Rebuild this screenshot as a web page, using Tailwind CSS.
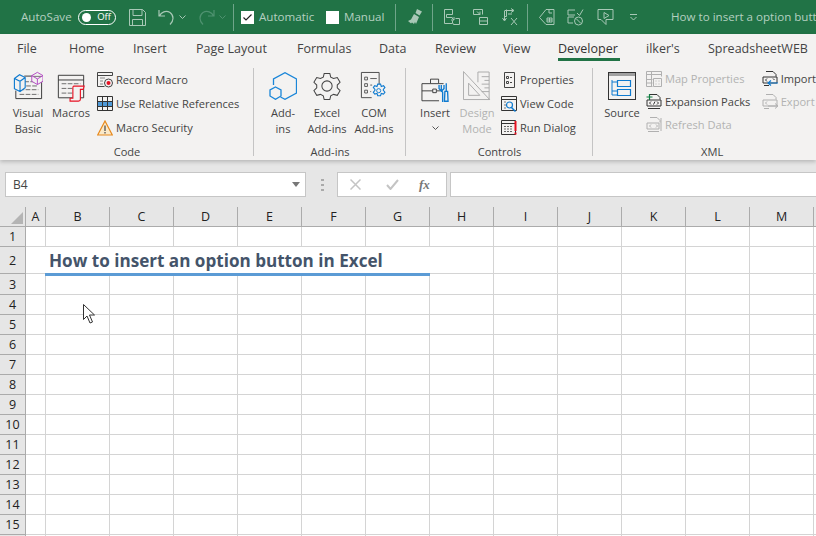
<!doctype html>
<html><head><meta charset="utf-8"><script src="https://cdn.jsdelivr.net/npm/@tailwindcss/browser@4"></script></head>
<body class="m-0">
<div class="relative w-[816px] h-[536px] overflow-hidden bg-white font-['Open_Sans',sans-serif] text-[11.1px] text-[#444]">

<!-- title bar -->
<header class="h-[34px] bg-[#217346] flex items-center text-[#b4d0c0] text-[11.6px] whitespace-nowrap overflow-hidden [&>*]:shrink-0">
  <span class="ml-[21px] w-[57px]">AutoSave</span>
  <span class="w-[38px] h-[15px] rounded-full border border-white flex items-center justify-between pl-[3px] pr-[4px] text-white text-[9.5px]"><span class="w-[9px] h-[9px] rounded-full bg-white"></span>Off</span>
  <svg class="ml-[13px]" width="17" height="17" viewBox="0 0 17 17" fill="none" stroke="#a8c8b6"><path d="M.5.500h13l3 3v13H.5zM4 .5v6h9v-6M3.500 16.500v-6h10v6"/></svg>
  <svg class="ml-[12px]" width="17" height="17" viewBox="0 0 17 17" fill="none" stroke="#a8c8b6" stroke-width="1.200"><path d="M1 1v6h6M1.500 7C3 3 8 1 12 3.500c4 3 4 8 0 12"/></svg>
  <svg class="ml-[4px]" width="7" height="4" viewBox="0 0 7 4" fill="none" stroke="#a8c8b6"><path d="M.5.500l3 3 3-3"/></svg>
  <svg class="ml-[12px]" width="17" height="17" viewBox="0 0 17 17" fill="none" stroke="#4f9270" stroke-width="1.200"><path d="M16 1v6h-6M15.500 7C14 3 9 1 5 3.500c-4 3-4 8 0 12"/></svg>
  <svg class="ml-[4px]" width="7" height="4" viewBox="0 0 7 4" fill="none" stroke="#4f9270"><path d="M.5.500l3 3 3-3"/></svg>
  <span class="ml-[7px] w-px h-[27px] bg-[#6fa58a]"></span>
  <span class="ml-[7px] w-[13px] h-[13px] bg-white flex items-center justify-center"><svg width="9" height="7" viewBox="0 0 9 7" fill="none" stroke="#222" stroke-width="1.200"><path d="M.5 3.500l2.500 2.500 5.500-5.500"/></svg></span>
  <span class="ml-[5px] w-[67px]">Automatic</span>
  <span class="w-[13px] h-[13px] bg-white"></span>
  <span class="ml-[5px] w-[51px]">Manual</span>
  <span class="w-px h-[27px] bg-[#6fa58a]"></span>
  <svg class="ml-[10px]" width="18" height="18" viewBox="0 0 18 18" fill="#a8c8b6"><path d="M11 1l5 2.500-2.500 4-4-2.500zM8 6l5 3-3 7-1-2-1 2-2-1.500-1 1-3-2.500 3-1.500z"/></svg>
  <span class="ml-[8px] w-px h-[27px] bg-[#6fa58a]"></span>
  <svg class="ml-[10px]" width="18" height="18" viewBox="0 0 18 18" fill="none" stroke="#a8c8b6"><path d="M1.500 1.500h8v5h-6v3h6M1.500 1.500v14h8v-3M8 9l3 3m0-3v3H8M12.500 10.500h4v6h-6v-1"/></svg>
  <svg class="ml-[11px]" width="17" height="18" viewBox="0 0 17 18" fill="none" stroke="#a8c8b6"><path d="M1.500 1.500h9v5M1.500 1.500v5h4M5 3.500l3 3m0-3v3H5M7.500 9.500h8v7h-8zM7.500 13h8"/></svg>
  <svg class="ml-[12px]" width="17" height="18" viewBox="0 0 17 18" fill="none" stroke="#a8c8b6"><path d="M3.500 2.500h9M10 .5l3 2-3 2M5.500 1.500v7h-2M3.500 3v9M1.500 10l2 3 2-3M10 10l6 7m0-7l-6 7M7 6h4"/></svg>
  <span class="ml-[9px] w-px h-[27px] bg-[#6fa58a]"></span>
  <svg class="ml-[10px]" width="17" height="18" viewBox="0 0 17 18" fill="none" stroke="#a8c8b6"><path d="M8 1.500h8v15H8L1.500 9.500zM9 10h5v4H9zM11.500 10v4M9 12h5M11 2v3h3"/></svg>
  <svg class="ml-[12px]" width="17" height="18" viewBox="0 0 17 18" fill="none" stroke="#a8c8b6"><path d="M1 2h7M1 2v5h7M1 9h6M1 9v6h5M10 5l2.500 2.500L16 1.500"/><circle cx="11.500" cy="13" r="4"/><path d="M9 10.500l5 5"/></svg>
  <svg class="ml-[13px]" width="17" height="18" viewBox="0 0 17 18" fill="none" stroke="#a8c8b6"><path d="M1 1.500h15v10H9v5l-5-5H1zM7 4.500v6l5-3z"/></svg>
  <svg class="ml-[15px]" width="9" height="7" viewBox="0 0 9 7" fill="none" stroke="#a8c8b6"><path d="M1 .5h7M1.500 3l3 3 3-3"/></svg>
  <span class="ml-[33px]">How to insert a option button in Excel</span>
</header>

<!-- ribbon -->
<div class="relative z-10 bg-[#f3f2f1] h-[126px] shadow-[0_2px_4px_rgba(0,0,0,0.2)]">
  <nav class="h-[30px] flex items-center text-[12.5px] text-[#444] whitespace-nowrap">
    <span class="ml-[17px] w-[52px]">File</span>
    <span class="w-[64px]">Home</span>
    <span class="w-[63px]">Insert</span>
    <span class="w-[101px]">Page Layout</span>
    <span class="w-[82px]">Formulas</span>
    <span class="w-[56px]">Data</span>
    <span class="w-[68px]">Review</span>
    <span class="w-[55px]">View</span>
    <span class="relative w-[88px] text-[#333]">Developer<span class="absolute left-0 top-[18px] w-[62px] h-[3px] bg-[#217346]"></span></span>
    <span class="w-[62px]">ilker's</span>
    <span>SpreadsheetWEB</span>
  </nav>

  <div class="h-[96px] flex whitespace-nowrap leading-[16px]">
    <!-- Code -->
    <section class="w-[254px] flex flex-col shrink-0">
      <div class="flex-1 flex">
        <div class="ml-[8px] w-[40px] flex flex-col items-center pt-[6px]">
          <svg width="30" height="30" viewBox="0 0 32 32" fill="none"><path d="M12 6.500h18.500v24H3V22" stroke="#333"/><path d="M12 12.500h15M14 17h13M7 21h20M7 26h20" stroke="#666" stroke-dasharray="5 1.500"/><path d="M20 6l6-3.500 6 3.500v6l-6 3.500-6-3.500zM20 6l6 3.500 6-3.500M26 9.500v6" stroke="#b146c2" fill="#f3f2f1"/><path d="M1.500 9l5.500-4 6 3v11l-5.500 4-6-3zM1.500 9l6 3 5.500-4M7.500 12v11" stroke="#0f7bd0" fill="#f3f2f1" stroke-width="1.200"/></svg>
          <span class="mt-[5px] text-center">Visual<br>Basic</span>
        </div>
        <div class="ml-[3px] w-[40px] flex flex-col items-center pt-[8px]">
          <svg width="30" height="30" viewBox="0 0 32 32" fill="none"><path d="M2.500 3.500h27v24h-27zM2.500 8.500h27" stroke="#333"/><path d="M6 12.500h20M6 17.500h16M6 22.500h12" stroke="#666" stroke-dasharray="5 1.500"/><path d="M19 15h11l-1 3.500h-3v10.500a2 2 0 0 1-2 2h-9v-3h3V17a2 2 0 0 1 1-2z" fill="#f3f2f1" stroke="#e81123" stroke-width="1.200"/></svg>
          <span class="mt-[3px] text-center">Macros</span>
        </div>
        <div class="ml-[6px] flex flex-col pt-[8px] gap-[8px]">
          <div class="flex items-center h-[16px] gap-[3px]"><svg width="16" height="16" viewBox="0 0 16 16" fill="none"><path d="M.5.500h15v3M.5.500v14h7M.5 3.500h15" stroke="#444"/><path d="M3 6h5M3 9h3M3 12h3" stroke="#888"/><circle cx="11.500" cy="11" r="4" fill="#f3f2f1" stroke="#444"/><circle cx="11.500" cy="11" r="2" fill="#e81123"/></svg><span>Record Macro</span></div>
          <div class="flex items-center h-[16px] gap-[3px]"><svg width="16" height="16" viewBox="0 0 16 16" fill="none"><rect x="0" y="5" width="16" height="6" fill="#4f9ad8"/><path d="M.5.500h15v14H.5zM5.500.500v14M10.500.500v14M.5 5.500h15M.5 10.500h15" stroke="#333"/></svg><span>Use Relative References</span></div>
          <div class="flex items-center h-[16px] gap-[3px]"><svg width="16" height="16" viewBox="0 0 16 16" fill="none"><path d="M8 1l7.300 14H.7z" fill="#fbe9c8" stroke="#e8891c" stroke-width="1.200"/><path d="M8 5.500v5.500M8 12v1.500" stroke="#444" stroke-width="1.200"/></svg><span>Macro Security</span></div>
        </div>
      </div>
      <div class="h-[20px] text-center pt-[4px]">Code</div>
    </section>
    <span class="w-px h-[88px] mt-[4px] bg-[#c4c4c4] -ml-[1px] shrink-0"></span>

    <!-- Add-ins -->
    <section class="w-[152px] flex flex-col shrink-0">
      <div class="flex-1 flex">
        <div class="ml-[9px] w-[40px] flex flex-col items-center pt-[8px]">
          <svg width="28" height="28" viewBox="0 0 28 28" fill="none" stroke="#1a86d8" stroke-width="1.300"><path d="M4.500 13V7L16 .7l11.500 6.300v14L16 27.300 11.500 25"/><path d="M6.500 15l5.500 3v6l-5.500 3.300L1 24v-6z"/></svg>
          <span class="mt-[5px] text-center">Add-<br>ins</span>
        </div>
        <div class="ml-[1px] w-[46px] flex flex-col items-center pt-[7px]">
          <svg width="28" height="30" viewBox="0 0 30 32" fill="none" stroke="#444" stroke-width="1.100"><path d="M12 2.500h6l1 4 3 1.500 4-1 3 5-3 3v3l3 3-3 5-4-1-3 1.500-1 4h-6l-1-4-3-1.500-4 1-3-5 3-3v-3l-3-3 3-5 4 1 3-1.500z"/><circle cx="15" cy="16" r="5.500"/></svg>
          <span class="mt-[4px] text-center">Excel<br>Add-ins</span>
        </div>
        <div class="w-[48px] flex flex-col items-center pt-[7px]">
          <svg width="28" height="30" viewBox="0 0 30 32" fill="none"><path d="M1.500 1.500h19v16M1.500 1.500v27h11" stroke="#444"/><path d="M5 6.500h3v3H5zM5 13.500h3v3H5zM5 20.500h3v3H5zM11 8h7M11 15h2M11 22h1" stroke="#555"/><path d="M20 14l2 0 .8 2.500 2.400-.8 1.500 2-1.700 2v1l1.700 2-1.500 2-2.400-.8-.8 2.500h-3l-.8-2.500-2.400.8-1.500-2 1.700-2v-1l-1.700-2 1.500-2 2.400.8.800-2.500z" fill="#f3f2f1" stroke="#0f7bd0" stroke-width="1.200"/><circle cx="20" cy="21" r="2.200" stroke="#0f7bd0"/></svg>
          <span class="mt-[4px] text-center">COM<br>Add-ins</span>
        </div>
      </div>
      <div class="h-[20px] text-center pt-[4px]">Add-ins</div>
    </section>
    <span class="w-px h-[88px] mt-[4px] bg-[#c4c4c4] -ml-[1px] shrink-0"></span>

    <!-- Controls -->
    <section class="w-[187px] flex flex-col shrink-0">
      <div class="flex-1 flex">
        <div class="ml-[9px] w-[40px] flex flex-col items-center pt-[12px]">
          <svg width="30" height="27" viewBox="0 0 32 30" fill="none"><path d="M1.500 8.500h24M1.500 8.500v19h19M11 8V3.500h9V8M1.500 16.500h12M18 16.500h4" stroke="#333"/><path d="M13.500 14.500h4v4h-4z" stroke="#333"/><path d="M23 10v6l1.500 2v11M20.500 10v4l2.500 3 3-3v-4" stroke="#0f7bd0" stroke-width="1.500"/><path d="M28.500 8v9M27 17h3l.5 11h-4z" stroke="#0f7bd0" stroke-width="1.500"/></svg>
          <span class="mt-[2px] text-center">Insert</span>
          <svg class="mt-[5px]" width="7" height="4" viewBox="0 0 7 4" fill="none" stroke="#555"><path d="M.5.500l3 3 3-3"/></svg>
        </div>
        <div class="ml-[2px] w-[40px] flex flex-col items-center pt-[7px] text-[#b2b2b2]">
          <svg width="28" height="30" viewBox="0 0 30 32" fill="none" stroke="#a8a8a8"><path d="M.5.500l28 30H.5zM6 13l12 13H6z"/><path d="M16 12V1h12v30" /><path d="M20 6h8M23 10h5M20 14h8M23 18h5M20 22h8" /></svg>
          <span class="mt-[4px] text-center">Design<br>Mode</span>
        </div>
        <div class="ml-[4px] flex flex-col pt-[8px] gap-[8px]">
          <div class="flex items-center h-[16px] gap-[3px]"><svg width="16" height="16" viewBox="0 0 16 16" fill="none" stroke="#444"><path d="M3.500.5h10v15h-10zM5.500 4.500h2v2h-2zM5.500 9.500h2v2h-2zM9 5.500h2M9 10.500h2"/></svg><span>Properties</span></div>
          <div class="flex items-center h-[16px] gap-[3px]"><svg width="16" height="16" viewBox="0 0 16 16" fill="none"><path d="M.5.500h15v14H.5zM.5 3.500h15" stroke="#333"/><circle cx="8.500" cy="9" r="3" stroke="#0f7bd0" stroke-width="1.200"/><path d="M10.500 11.500l4 4" stroke="#0f7bd0" stroke-width="1.500"/><path d="M3 6h2M3 9h2M3 12h2" stroke="#777"/></svg><span>View Code</span></div>
          <div class="flex items-center h-[16px] gap-[3px]"><svg width="16" height="16" viewBox="0 0 16 16" fill="none"><path d="M.5.500h14v14H.5zM.5 3.500h14" stroke="#333"/><path d="M3 6.500h9M3 9h9M3 11.500h9" stroke="#666" stroke-dasharray="2 1"/><path d="M14.500 1v10M14.500 12.500v2" stroke="#e81123" stroke-width="2"/></svg><span>Run Dialog</span></div>
        </div>
      </div>
      <div class="h-[20px] text-center pt-[4px]">Controls</div>
    </section>
    <span class="w-px h-[88px] mt-[4px] bg-[#c4c4c4] -ml-[1px] shrink-0"></span>

    <!-- XML -->
    <section class="w-[223px] flex flex-col shrink-0">
      <div class="flex-1 flex">
        <div class="ml-[9px] w-[40px] flex flex-col items-center pt-[8px]">
          <svg width="28" height="28" viewBox="0 0 28 28" fill="none"><rect x=".5" y=".5" width="27" height="27" stroke="#333"/><rect x="1" y="1" width="26" height="3" fill="#a0a0a0"/><path d="M4 8v15h5M4 10h5M4 19h5" stroke="#0f7bd0"/><path d="M9.500 8.500h13v6h-13zM9.500 17.500h13v6h-13z" stroke="#0f7bd0" stroke-width="1.200"/></svg>
          <span class="mt-[5px] text-center">Source</span>
        </div>
        <div class="ml-[4px] w-[106px] flex flex-col pt-[7px] gap-[7px]">
          <div class="flex items-center h-[16px] gap-[3px] text-[#b2b2b2]"><svg width="16" height="16" viewBox="0 0 16 16" fill="none" stroke="#b0b0b0"><path d="M.5.500h15v5M.5.500v15h6M.5 3.500h15M5.500.500v15M.5 8.500h6M.5 12h6M7.500 7.500h8v8h-8zM9.500 10h1M12.500 10h1M9.500 13h1M12.500 13h1"/></svg><span>Map Properties</span></div>
          <div class="flex items-center h-[16px] gap-[3px]"><svg width="16" height="16" viewBox="0 0 16 16" fill="none"><path d="M4 .5h7l3 3v2M1 6h14v6H1zM2 14.500h12" stroke="#333"/><path d="M5 7.500L3.500 9 5 10.500M11 7.500L12.500 9 11 10.500M9 7.500L7.500 10.500" stroke="#333"/><path d="M3.500 0v6M.5 3h6" stroke="#107c41" stroke-width="1.200"/></svg><span>Expansion Packs</span></div>
          <div class="flex items-center h-[16px] gap-[3px] text-[#b2b2b2]"><svg width="16" height="16" viewBox="0 0 16 16" fill="none" stroke="#b0b0b0"><path d="M4 .5h7l3 3v2M1 6h12v6H1zM2 14.500h11M5 7.500L3.500 9 5 10.500M10 7.500L11.500 9 10 10.500M15 1v13"/></svg><span>Refresh Data</span></div>
        </div>
        <div class="ml-[10px] flex flex-col pt-[7px] gap-[7px]">
          <div class="flex items-center h-[16px] gap-[3px]"><svg width="16" height="16" viewBox="0 0 16 16" fill="none"><path d="M4 .5h7l3 3v2M1 6h14v6H1zM2 14.500h5" stroke="#333"/><path d="M5 7.500L3.500 9 5 10.500M11 7.500L12.500 9" stroke="#333"/><path d="M16 12H6M9 9.500L6 12l3 2.500" stroke="#0f7bd0" stroke-width="1.200"/></svg><span>Import</span></div>
          <div class="flex items-center h-[16px] gap-[3px] text-[#b2b2b2]"><svg width="16" height="16" viewBox="0 0 16 16" fill="none" stroke="#b0b0b0"><path d="M4 .5h7l3 3v2M1 6h14v6H1zM2 14.500h5M5 7.500L3.500 9 5 10.500M6 12h9M13 9.500l3 2.500-3 2.500"/></svg><span>Export</span></div>
        </div>
      </div>
      <div class="h-[20px] pt-[4px] pl-[108px]">XML</div>
    </section>
  </div>
</div>

<!-- formula bar -->
<div class="h-[47px] bg-[#e6e6e6] flex items-center pt-[2px] text-[#444]">
  <div class="ml-[5px] w-[301px] h-[25px] bg-white border border-[#c6c6c6] flex items-center justify-between pl-[7px] pr-[5px] text-[12px]">B4<span class="w-0 h-0 border-x-[4px] border-x-transparent border-t-[5px] border-t-[#777]"></span></div>
  <div class="ml-[15px] w-[3px] h-[12px] bg-[repeating-linear-gradient(180deg,#aaa_0,#aaa_2px,transparent_2px,transparent_5px)]"></div>
  <div class="ml-[13px] w-[110px] h-[25px] bg-white border border-[#c6c6c6] flex items-center">
    <svg class="ml-[12px]" width="11" height="11" viewBox="0 0 11 11" stroke="#c4c4c4" stroke-width="1.500"><path d="M.5.500l10 10m0-10l-10 10"/></svg>
    <svg class="ml-[25px]" width="13" height="11" viewBox="0 0 13 11" fill="none" stroke="#c4c4c4" stroke-width="2"><path d="M1 6l3.500 4L12 1"/></svg>
    <span class="ml-[20px] font-['Liberation_Serif',serif] italic font-bold text-[13px] text-[#777]">fx</span>
  </div>
  <div class="ml-[3px] flex-1 h-[25px] bg-white border border-[#c6c6c6] border-r-0"></div>
</div>

<!-- sheet -->
<div class="text-[#222] text-[12.5px] leading-none">
  <div class="flex h-[20px] bg-[#e6e6e6] border-b border-[#ababab] whitespace-nowrap">
    <div class="relative w-[26px] border-r border-[#ababab]"><span class="absolute right-[2px] bottom-[2px] w-0 h-0 border-l-[12px] border-l-transparent border-b-[12px] border-b-[#b4b4b4]"></span></div>
    <div class="w-[20px] border-r border-[#ababab] flex items-center justify-center pt-[1px]">A</div>
    <div class="w-[64px] border-r border-[#ababab] flex items-center justify-center pt-[1px]">B</div>
    <div class="w-[64px] border-r border-[#ababab] flex items-center justify-center pt-[1px]">C</div>
    <div class="w-[64px] border-r border-[#ababab] flex items-center justify-center pt-[1px]">D</div>
    <div class="w-[64px] border-r border-[#ababab] flex items-center justify-center pt-[1px]">E</div>
    <div class="w-[64px] border-r border-[#ababab] flex items-center justify-center pt-[1px]">F</div>
    <div class="w-[64px] border-r border-[#ababab] flex items-center justify-center pt-[1px]">G</div>
    <div class="w-[64px] border-r border-[#ababab] flex items-center justify-center pt-[1px]">H</div>
    <div class="w-[64px] border-r border-[#ababab] flex items-center justify-center pt-[1px]">I</div>
    <div class="w-[64px] border-r border-[#ababab] flex items-center justify-center pt-[1px]">J</div>
    <div class="w-[64px] border-r border-[#ababab] flex items-center justify-center pt-[1px]">K</div>
    <div class="w-[64px] border-r border-[#ababab] flex items-center justify-center pt-[1px]">L</div>
    <div class="w-[64px] border-r border-[#ababab] flex items-center justify-center pt-[1px]">M</div>
  </div>
  <div class="flex h-[20px]"><div class="w-[26px] pt-[2px] bg-[#e6e6e6] border-r border-b border-[#ababab] flex items-center justify-center">1</div><div class="flex-1 border-b border-[#d4d4d4] bg-[linear-gradient(90deg,#d4d4d4_1px,transparent_1px)] bg-[length:64px_100%] bg-[position:19px_0]"></div></div>
  <div class="flex h-[27px]"><div class="w-[26px] pt-[2px] bg-[#e6e6e6] border-r border-b border-[#ababab] flex items-center justify-center">2</div><div class="relative flex-1 border-b border-[#d4d4d4] bg-[linear-gradient(90deg,#d4d4d4_1px,transparent_1px)] bg-[length:64px_100%] bg-[position:19px_0]"><span class="absolute left-[19px] top-0 w-[385px] h-[29px] bg-white border-b-[3px] border-[#5b9bd5] pl-[4px] pt-[5px] text-[17.1px] font-bold text-[#44546a] whitespace-nowrap">How to insert an option button in Excel</span></div></div>
  <div class="flex h-[21px]"><div class="w-[26px] pt-[2px] bg-[#e6e6e6] border-r border-b border-[#ababab] flex items-center justify-center">3</div><div class="flex-1 border-b border-[#d4d4d4] bg-[linear-gradient(90deg,#d4d4d4_1px,transparent_1px)] bg-[length:64px_100%] bg-[position:19px_0]"></div></div>
  <div class="flex h-[20px]"><div class="w-[26px] pt-[2px] bg-[#e6e6e6] border-r border-b border-[#ababab] flex items-center justify-center">4</div><div class="flex-1 border-b border-[#d4d4d4] bg-[linear-gradient(90deg,#d4d4d4_1px,transparent_1px)] bg-[length:64px_100%] bg-[position:19px_0]"></div></div>
  <div class="flex h-[20px]"><div class="w-[26px] pt-[2px] bg-[#e6e6e6] border-r border-b border-[#ababab] flex items-center justify-center">5</div><div class="flex-1 border-b border-[#d4d4d4] bg-[linear-gradient(90deg,#d4d4d4_1px,transparent_1px)] bg-[length:64px_100%] bg-[position:19px_0]"></div></div>
  <div class="flex h-[20px]"><div class="w-[26px] pt-[2px] bg-[#e6e6e6] border-r border-b border-[#ababab] flex items-center justify-center">6</div><div class="flex-1 border-b border-[#d4d4d4] bg-[linear-gradient(90deg,#d4d4d4_1px,transparent_1px)] bg-[length:64px_100%] bg-[position:19px_0]"></div></div>
  <div class="flex h-[20px]"><div class="w-[26px] pt-[2px] bg-[#e6e6e6] border-r border-b border-[#ababab] flex items-center justify-center">7</div><div class="flex-1 border-b border-[#d4d4d4] bg-[linear-gradient(90deg,#d4d4d4_1px,transparent_1px)] bg-[length:64px_100%] bg-[position:19px_0]"></div></div>
  <div class="flex h-[20px]"><div class="w-[26px] pt-[2px] bg-[#e6e6e6] border-r border-b border-[#ababab] flex items-center justify-center">8</div><div class="flex-1 border-b border-[#d4d4d4] bg-[linear-gradient(90deg,#d4d4d4_1px,transparent_1px)] bg-[length:64px_100%] bg-[position:19px_0]"></div></div>
  <div class="flex h-[20px]"><div class="w-[26px] pt-[2px] bg-[#e6e6e6] border-r border-b border-[#ababab] flex items-center justify-center">9</div><div class="flex-1 border-b border-[#d4d4d4] bg-[linear-gradient(90deg,#d4d4d4_1px,transparent_1px)] bg-[length:64px_100%] bg-[position:19px_0]"></div></div>
  <div class="flex h-[20px]"><div class="w-[26px] pt-[2px] bg-[#e6e6e6] border-r border-b border-[#ababab] flex items-center justify-center">10</div><div class="flex-1 border-b border-[#d4d4d4] bg-[linear-gradient(90deg,#d4d4d4_1px,transparent_1px)] bg-[length:64px_100%] bg-[position:19px_0]"></div></div>
  <div class="flex h-[20px]"><div class="w-[26px] pt-[2px] bg-[#e6e6e6] border-r border-b border-[#ababab] flex items-center justify-center">11</div><div class="flex-1 border-b border-[#d4d4d4] bg-[linear-gradient(90deg,#d4d4d4_1px,transparent_1px)] bg-[length:64px_100%] bg-[position:19px_0]"></div></div>
  <div class="flex h-[20px]"><div class="w-[26px] pt-[2px] bg-[#e6e6e6] border-r border-b border-[#ababab] flex items-center justify-center">12</div><div class="flex-1 border-b border-[#d4d4d4] bg-[linear-gradient(90deg,#d4d4d4_1px,transparent_1px)] bg-[length:64px_100%] bg-[position:19px_0]"></div></div>
  <div class="flex h-[20px]"><div class="w-[26px] pt-[2px] bg-[#e6e6e6] border-r border-b border-[#ababab] flex items-center justify-center">13</div><div class="flex-1 border-b border-[#d4d4d4] bg-[linear-gradient(90deg,#d4d4d4_1px,transparent_1px)] bg-[length:64px_100%] bg-[position:19px_0]"></div></div>
  <div class="flex h-[20px]"><div class="w-[26px] pt-[2px] bg-[#e6e6e6] border-r border-b border-[#ababab] flex items-center justify-center">14</div><div class="flex-1 border-b border-[#d4d4d4] bg-[linear-gradient(90deg,#d4d4d4_1px,transparent_1px)] bg-[length:64px_100%] bg-[position:19px_0]"></div></div>
  <div class="flex h-[20px]"><div class="w-[26px] pt-[2px] bg-[#e6e6e6] border-r border-b border-[#ababab] flex items-center justify-center">15</div><div class="flex-1 border-b border-[#d4d4d4] bg-[linear-gradient(90deg,#d4d4d4_1px,transparent_1px)] bg-[length:64px_100%] bg-[position:19px_0]"></div></div>
  <div class="flex h-[20px]"><div class="w-[26px] bg-[#e6e6e6] border-r border-[#ababab]"></div><div class="flex-1 bg-[linear-gradient(90deg,#d4d4d4_1px,transparent_1px)] bg-[length:64px_100%] bg-[position:19px_0]"></div></div>
</div>

<!-- mouse pointer -->
<svg class="absolute left-[83px] top-[304px]" width="13" height="20" viewBox="0 0 13 20" fill="#fff" stroke="#333"><path d="M.5.500v15l3.500-3.500 3 7 2.500-1-3-7h5z"/></svg>
</div>
</body></html>
